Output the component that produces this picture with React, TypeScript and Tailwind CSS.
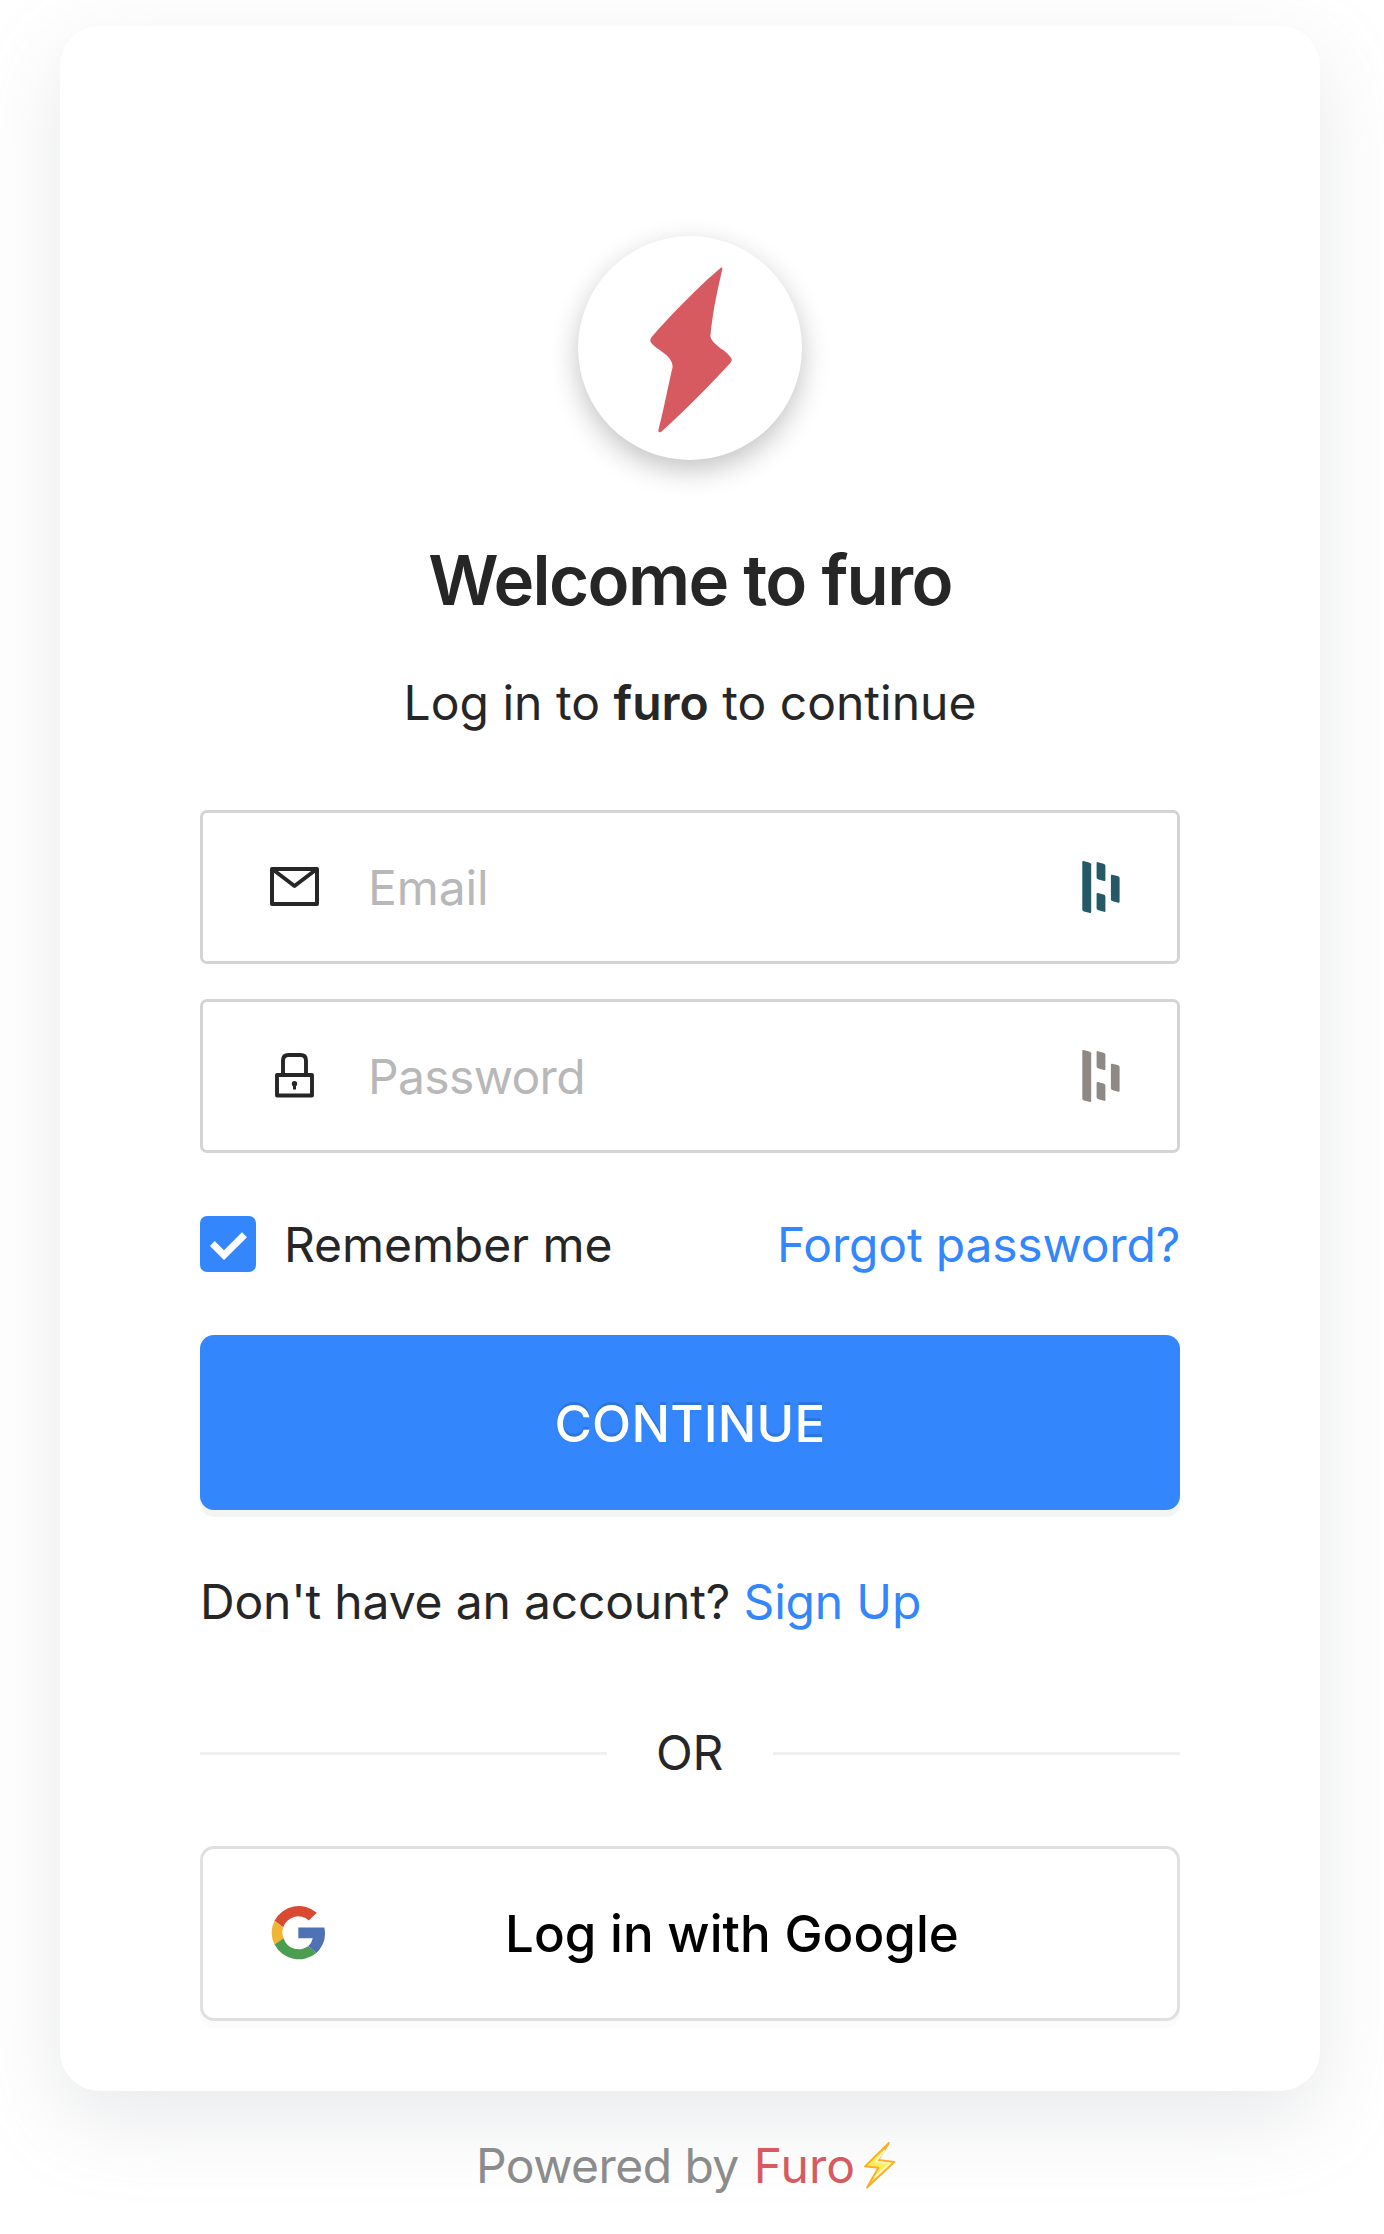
import type { ReactNode } from "react";

function FuroLogo() {
  return (
    <svg className="size-full" viewBox="114 108 672 672" fill="#d75a61">
      <path d="M543 203Q548 200 547 207C536 256 520 321 511 408Q512 423 543 446C556 452 568 465 575 476Q577 481 571 489C505 560 445 622 364 695Q355 700 355 691C373 619 384 560 398 500Q397 477 371 459C356 447 338 439 331 424Q330 417 335 411C386 351 482 253 543 203Z" />
    </svg>
  );
}

function MailIcon() {
  return (
    <svg className="h-[50px] w-[49px]" viewBox="0 0 49 50" fill="none" stroke="#262626" strokeWidth="4" strokeLinejoin="round" strokeLinecap="round">
      <rect x="2" y="7" width="45" height="35" />
      <path d="M3.500 8L24.500 24L45.500 8" />
    </svg>
  );
}

function LockIcon() {
  return (
    <svg className="h-[50px] w-[49px]" viewBox="0 0 49 50" fill="none" stroke="#262626" strokeWidth="3.900" strokeLinejoin="round">
      <rect x="7" y="24" width="35" height="20.500" />
      <path d="M13 24V9.500Q13 4 18.500 4H30.500Q36 4 36 9.500V24" />
      <g fill="#262626" stroke="none">
        <circle cx="24.500" cy="32.700" r="2.700" />
        <path d="M23 33h3v5.500h-3z" />
      </g>
    </svg>
  );
}

function DashlaneIcon({ className }: { className: string }) {
  return (
    <svg className={`h-[54px] w-[38px] ${className}`} viewBox="0 0 38 54" fill="currentColor">
      <path d="M.3 2Q.3 .8 1.500 1L7 2.400Q9.200 3 9.200 4.200V52Q9.200 53.300 8 53L2 51.400Q.3 50.900 .3 49.500Z" />
      <path d="M14.600 3Q14.600 1.800 16 2.200L21.500 3.700Q23.400 4.300 23.400 5.500V20.300Q23.400 21.300 22 21L16.500 19.600Q14.600 19 14.600 17.600Z" />
      <path d="M14.600 34Q14.600 32.800 16 33.100L21.500 34.600Q23.400 35.200 23.400 36.500V51Q23.400 52.200 22 51.800L16.500 50.300Q14.600 49.700 14.600 48.300Z" />
      <path d="M28.900 15.500Q28.900 14.400 30.200 14.800L35.500 16.100Q37.600 16.700 37.600 18V41.500Q37.600 43 36.400 42.700L30.800 41.300Q28.900 40.700 28.900 39.500Z" />
    </svg>
  );
}

function GoogleIcon() {
  return (
    <svg className="mb-[2px] h-[55px] w-[54px]" viewBox="245 225 160 164">
      <path fill="#d84b32" d="M255 272A82 82 0 0 1 381 248L357 271A47 47 0 0 0 281 291Z" />
      <path fill="#f0b533" d="M255 272A82 82 0 0 0 255 343L282 324A47 47 0 0 1 281 291Z" />
      <path fill="#4b9d4f" d="M255 343A82 82 0 0 0 380 368L355 348A47 47 0 0 1 282 324Z" />
      <path fill="#4e72b5" d="M326 292H403.500A82 82 0 0 1 380 368L355 348Q366 339 369 324H326Z" />
    </svg>
  );
}

function BoltIcon() {
  return (
    <svg className="h-[49px] w-[34px]" viewBox="0 0 34 49">
      <path d="M25.900 2L15.200 18.900L31.500 20.900L4 46.500L15.400 26.700L2 25.400Z" fill="#ffee5c" stroke="#fdab2b" strokeWidth="1.900" strokeLinejoin="round" />
      <path d="M22 9L13 20.500L26.500 22.500L12 36" fill="none" stroke="#fffbd0" strokeWidth="1.600" />
    </svg>
  );
}

function Field({ icon, label, spacing, manager }: { icon: ReactNode; label: string; spacing: string; manager: string }) {
  return (
    <label className="flex h-[154px] items-center rounded-[7px] border-3 border-[#d4d4d4] bg-white pr-[57px] pl-[67px]">
      {icon}
      <span className={`ml-[49px] flex-1 text-[#b8b8b8] ${spacing}`}>{label}</span>
      <DashlaneIcon className={manager} />
    </label>
  );
}

export default function App() {
  return (
    <div className="h-[2234px] overflow-hidden bg-white pt-[26px] font-[Inter,sans-serif] text-[48px] leading-[77px] text-[#262626]">
      <main className="ml-[60px] h-[2065px] w-[1260px] rounded-[40px] bg-white px-[140px] pt-[210px] shadow-[0_28px_84px_rgba(149,157,165,0.22)]">
        <div className="mx-auto size-[224px] rounded-full bg-white shadow-[0_10px_28px_rgba(0,0,0,0.24)]">
          <FuroLogo />
        </div>
        <h1 className="mt-[85px] text-center text-[69px] leading-[70px] font-semibold tracking-[-1.65px]">Welcome to furo</h1>
        <p className="mt-[49px] text-center whitespace-pre">
          Log in to <span className="font-semibold">furo</span> to continue
        </p>
        <div className="mt-[69px] flex flex-col gap-[35px]">
          <Field icon={<MailIcon />} label="Email" spacing="tracking-[-0.1px]" manager="text-[#255968]" />
          <Field icon={<LockIcon />} label="Password" spacing="tracking-[-0.65px]" manager="text-[#8e8985]" />
        </div>
        <div className="mt-[63px] flex h-[56px] items-center">
          <span className="size-[56px] rounded-[7px] bg-[#3386fb]">
            <svg viewBox="0 0 168 168" className="size-full" fill="#fff">
              <path d="M30 90L44 75L72 103L126 49L141 64L72 132Z" />
            </svg>
          </span>
          <span className="ml-[28px] tracking-[-0.08px]">Remember me</span>
          <a className="ml-auto tracking-[-0.18px] text-[#3386fb]">Forgot password?</a>
        </div>
        <button className="mt-[63px] block h-[175px] w-full rounded-[14px] bg-[#3386fb] pt-[2px] text-[51px] font-[450] tracking-[0.2px] text-white shadow-[0_7px_0_rgba(0,0,0,0.045)] text-shadow-[0_-3px_0_rgba(0,0,0,0.12)]">
          CONTINUE
        </button>
        <p className="mt-[53px] tracking-[-0.17px]">
          Don't have an account? <a className="text-[#3386fb]">Sign Up</a>
        </p>
        <div className="mt-[74px] flex items-center justify-between">
          <span className="mt-[2px] h-[3px] w-[407px] bg-[#f0f0f0]" />
          <span className="pr-[1px] tracking-[-0.3px]">OR</span>
          <span className="mt-[2px] h-[3px] w-[407px] bg-[#f0f0f0]" />
        </div>
        <button className="mt-[55px] flex h-[175px] w-full items-center rounded-[14px] border-3 border-[#e0e0e0] bg-white pl-[68px] text-[51px] font-medium tracking-[0.05px] text-black shadow-[0_7px_0_rgba(0,0,0,0.016)]">
          <GoogleIcon />
          <span className="ml-[180px]">Log in with Google</span>
        </button>
      </main>
      <footer className="mt-[36px] flex items-center pl-[476px] text-[#8c8c8c]">
        <span className="tracking-[-0.55px]">Powered by</span>
        <a className="ml-[15px] flex items-center text-[#d75a61]">
          Furo
          <span className="ml-[8px]">
            <BoltIcon />
          </span>
        </a>
      </footer>
    </div>
  );
}
